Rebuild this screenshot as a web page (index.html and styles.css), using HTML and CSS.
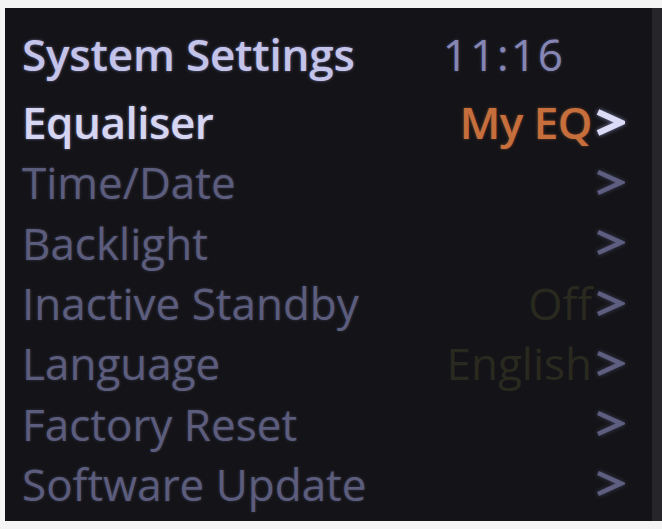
FILE: index.html
```html
<!DOCTYPE html>
<html lang="en">
<head>
<meta charset="utf-8">
<title>System Settings</title>
<link rel="stylesheet" href="styles.css">
</head>
<body>
<div class="screen">
  <div class="title-row">
    <span class="title">System Settings</span>
    <span class="clock">11:16</span>
  </div>
  <ul class="menu">
    <li class="item active"><span class="label">Equaliser</span><span class="end"><span class="value eq">My EQ</span><svg class="chev" viewBox="0 0 30 27" width="30" height="27"><polyline points="3,3 26,13.5 3,24"/></svg></span></li>
    <li class="item"><span class="label">Time/Date</span><span class="end"><svg class="chev" viewBox="0 0 30 27" width="30" height="27"><polyline points="3,3 26,13.5 3,24"/></svg></span></li>
    <li class="item"><span class="label">Backlight</span><span class="end"><svg class="chev" viewBox="0 0 30 27" width="30" height="27"><polyline points="3,3 26,13.5 3,24"/></svg></span></li>
    <li class="item"><span class="label">Inactive Standby</span><span class="end"><span class="value dim">Off</span><svg class="chev" viewBox="0 0 30 27" width="30" height="27"><polyline points="3,3 26,13.5 3,24"/></svg></span></li>
    <li class="item"><span class="label">Language</span><span class="end"><span class="value dim">English</span><svg class="chev" viewBox="0 0 30 27" width="30" height="27"><polyline points="3,3 26,13.5 3,24"/></svg></span></li>
    <li class="item"><span class="label">Factory Reset</span><span class="end"><svg class="chev" viewBox="0 0 30 27" width="30" height="27"><polyline points="3,3 26,13.5 3,24"/></svg></span></li>
    <li class="item"><span class="label">Software Update</span><span class="end"><svg class="chev" viewBox="0 0 30 27" width="30" height="27"><polyline points="3,3 26,13.5 3,24"/></svg></span></li>
  </ul>
</div>
</body>
</html>
```

FILE: styles.css
```css
html, body {
  margin: 0;
  padding: 0;
  background: #f4f4f4;
}
body {
  font-family: "Open Sans", "DejaVu Sans", sans-serif;
}
.screen {
  margin: 8px 0 0 5px;
  width: 603px;
  height: 497px;
  padding: 16px 27px 0 17px;
  background: #141418;
  border-right: 10px solid #26262a;
  overflow: hidden;
}
.title-row {
  display: flex;
  justify-content: space-between;
  align-items: center;
  height: 60px;
  margin-bottom: 8px;
  padding-right: 62px;
  font-size: 44px;
  line-height: 60px;
}
.title {
  color: #c4c4ea;
  font-weight: 600;
  letter-spacing: -0.2px;
  text-shadow: 0 0 3px rgba(160,160,230,0.6);
}
.clock {
  color: #8686b4;
  font-weight: 400;
  letter-spacing: 2px;
  margin-right: -2px;
  text-shadow: 0 0 3px rgba(120,120,190,0.5);
}
.menu {
  list-style: none;
  margin: 0;
  padding: 0;
}
.item {
  display: flex;
  justify-content: space-between;
  align-items: center;
  height: 60.3px;
  font-size: 44px;
  line-height: 60px;
  color: #5c5c7c;
  text-shadow: 0 0 3px rgba(90,90,130,0.5);
}
.item.active {
  color: #d6d6f2;
  font-weight: 600;
  letter-spacing: -0.5px;
  text-shadow: 0 0 3px rgba(170,170,230,0.6);
}
.end {
  display: flex;
  align-items: center;
  gap: 3px;
}
.value.eq {
  color: #c66e3c;
  font-weight: 600;
  text-shadow: 0 0 3px rgba(200,110,60,0.5);
}
.value.dim {
  color: #29291f;
  text-shadow: none;
}
.chev {
  display: block;
  fill: none;
  stroke: #5e5e80;
  stroke-width: 4.5;
  stroke-linejoin: miter;
  filter: drop-shadow(0 0 2px rgba(90,90,130,0.6));
}
.item.active .chev {
  stroke: #dcdcf6;
  stroke-width: 6;
  filter: drop-shadow(0 0 2px rgba(170,170,230,0.7));
}
```
